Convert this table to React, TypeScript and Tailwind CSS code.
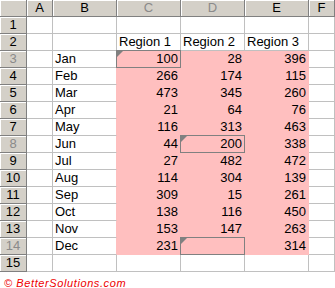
import React from "react";

const cols = ["A", "B", "C", "D", "E", "F"];
const dimCols = ["C", "D"];
const dimRows = [3, 8, 14];

// month, region 1, region 2, region 3 for rows 3..14
const data: [string, string, string, string][] = [
  ["Jan", "100", "28", "396"],
  ["Feb", "266", "174", "115"],
  ["Mar", "473", "345", "260"],
  ["Apr", "21", "64", "76"],
  ["May", "116", "313", "463"],
  ["Jun", "44", "200", "338"],
  ["Jul", "27", "482", "472"],
  ["Aug", "114", "304", "139"],
  ["Sep", "309", "15", "261"],
  ["Oct", "138", "116", "450"],
  ["Nov", "153", "147", "263"],
  ["Dec", "231", "", "314"],
];

// cells carrying a comment marker + box
const boxed = ["C3", "D8", "D14"];

function Cell({
  text = "",
  right,
  pink,
  edgePink,
  id,
}: {
  text?: string;
  right?: boolean;
  pink?: boolean;
  edgePink?: boolean;
  id: string;
}) {
  const isBoxed = boxed.includes(id);
  return (
    <div
      className={`relative h-[17px] border-r border-b px-[2px] leading-[16px] whitespace-nowrap ${
        right ? "text-right" : "text-left"
      } ${pink ? "bg-[#ffbfbf] border-[#ffbfbf]" : "bg-white border-[#c0c0c0]"} ${
        edgePink ? "border-r-[#ffbfbf]" : ""
      }`}
    >
      {text}
      {isBoxed && (
        <div className="absolute -left-px -top-px -right-px -bottom-px border border-[#808080] pointer-events-none">
          <svg width="6" height="6" className="absolute left-0 top-0">
            <polygon points="0,0 6,0 0,6" fill="#808080" />
          </svg>
        </div>
      )}
    </div>
  );
}

function Head({ label, dim }: { label: string; dim?: boolean }) {
  return (
    <div
      className={`h-[17px] bg-[#d4d0c8] border-r border-b border-[#808080] shadow-[inset_1px_1px_0_#ffffff] text-center leading-[16px] ${
        dim ? "text-[#8a8a8a]" : "text-black"
      }`}
    >
      {label}
    </div>
  );
}

export default function App() {
  const rows: React.ReactNode[] = [];

  for (let r = 1; r <= 15; r++) {
    const d = r >= 3 && r <= 14 ? data[r - 3] : null;
    const pink = !!d;
    let b = "";
    let c = "";
    let dd = "";
    let e = "";
    if (d) {
      [b, c, dd, e] = d;
    }
    if (r === 2) {
      c = "Region 1";
      dd = "Region 2";
      e = "Region 3";
    }
    rows.push(
      <React.Fragment key={r}>
        <Head label={String(r)} dim={dimRows.includes(r)} />
        <Cell id={`A${r}`} />
        <Cell id={`B${r}`} text={b} edgePink={pink} />
        <Cell id={`C${r}`} text={c} right={r > 2} pink={pink} />
        <Cell id={`D${r}`} text={dd} right={r > 2} pink={pink} />
        <Cell id={`E${r}`} text={e} right={r > 2} pink={pink} />
        <Cell id={`F${r}`} />
      </React.Fragment>
    );
  }

  return (
    <div className="w-[335px] h-[288px] bg-white overflow-hidden font-['Liberation_Sans',Arial,sans-serif] text-[13px] text-black">
      <div className="grid grid-cols-[27px_26px_64px_64px_64px_64px_1fr]">
        <Head label="" />
        {cols.map((c) => (
          <Head key={c} label={c} dim={dimCols.includes(c)} />
        ))}
        {rows}
      </div>
      <div className="pl-[4px] pt-[5px] text-[11px] leading-[12px] italic text-[#ee0000] tracking-[0.6px]">
        © BetterSolutions.com
      </div>
    </div>
  );
}
